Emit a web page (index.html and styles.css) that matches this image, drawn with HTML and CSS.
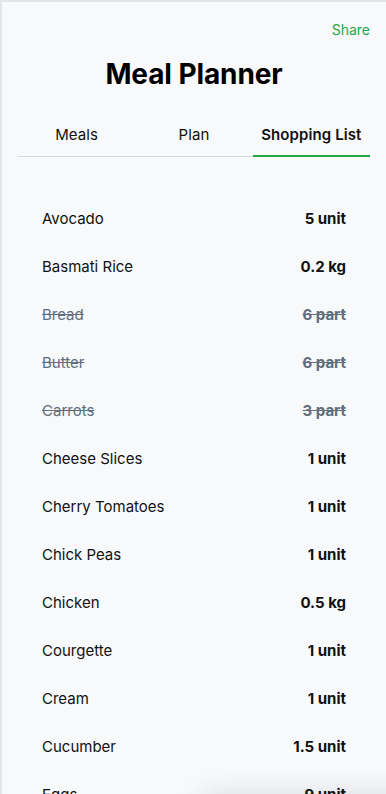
FILE: index.html
```html
<!DOCTYPE html>
<html lang="en">
<head>
<meta charset="utf-8">
<title>Meal Planner</title>
<link rel="stylesheet" href="styles.css">
</head>
<body>
<div class="frame">
  <div class="app">
    <div class="topbar"><a class="share" href="#">Share</a></div>
    <h1 class="title">Meal Planner</h1>
    <nav class="tabs">
      <div class="tab">Meals</div>
      <div class="tab">Plan</div>
      <div class="tab active">Shopping List</div>
    </nav>
    <ul class="list">
      <li class="row"><span class="name">Avocado</span><span class="qty">5 unit</span></li>
      <li class="row"><span class="name">Basmati Rice</span><span class="qty">0.2 kg</span></li>
      <li class="row done"><span class="name">Bread</span><span class="qty">6 part</span></li>
      <li class="row done"><span class="name">Butter</span><span class="qty">6 part</span></li>
      <li class="row done"><span class="name">Carrots</span><span class="qty">3 part</span></li>
      <li class="row"><span class="name">Cheese Slices</span><span class="qty">1 unit</span></li>
      <li class="row"><span class="name">Cherry Tomatoes</span><span class="qty">1 unit</span></li>
      <li class="row"><span class="name">Chick Peas</span><span class="qty">1 unit</span></li>
      <li class="row"><span class="name">Chicken</span><span class="qty">0.5 kg</span></li>
      <li class="row"><span class="name">Courgette</span><span class="qty">1 unit</span></li>
      <li class="row"><span class="name">Cream</span><span class="qty">1 unit</span></li>
      <li class="row"><span class="name">Cucumber</span><span class="qty">1.5 unit</span></li>
      <li class="row"><span class="name">Eggs</span><span class="qty">9 unit</span></li>
    </ul>
  </div>
  <div class="floating"></div>
</div>
</body>
</html>
```

FILE: styles.css
```css
html, body {
  margin: 0;
  padding: 0;
  height: 100%;
  overflow: hidden;
}
body {
  font-family: Inter, "Liberation Sans", Arial, sans-serif;
  color: #111111;
  background: #f8f9fb;
}
.frame {
  box-sizing: border-box;
  min-height: 100vh;
  border-top: 2px solid #e4e5e8;
  border-left: 2px solid #e4e5e8;
  background: #f8f9fb;
}
.app {
  padding: 0 16px;
}
.topbar {
  display: flex;
  justify-content: flex-end;
  padding-top: 18px;
}
.share {
  font-size: 14px;
  line-height: 20px;
  color: #22a846;
  text-decoration: none;
}
.title {
  margin: 16px 0 0;
  text-align: center;
  font-size: 28px;
  line-height: 36px;
  font-weight: 700;
  color: #000;
  letter-spacing: -0.1px;
}
.tabs {
  display: grid;
  grid-template-columns: 1fr 1fr 1fr;
  margin-top: 25px;
  border-bottom: 1px solid #d6d7da;
}
.tab {
  text-align: center;
  font-size: 15px;
  line-height: 20px;
  padding: 8px 0 10px;
  border-bottom: 2px solid transparent;
  margin-bottom: -1px;
  color: #111;
  letter-spacing: 0.1px;
}
.tab.active {
  font-weight: 600;
  border-bottom-color: #22a846;
}
.list {
  list-style: none;
  margin: 0;
  padding: 38px 24px 0;
}
.row {
  display: flex;
  justify-content: space-between;
  align-items: center;
  padding: 12px 0;
  font-size: 15px;
  line-height: 24px;
}
.qty {
  font-weight: 700;
}
.row.done {
  color: #626d7d;
  text-decoration: line-through;
}
.floating {
  position: fixed;
  left: 200px;
  top: 800px;
  width: 240px;
  height: 60px;
  border-radius: 16px;
  background: #f8f9fb;
  box-shadow: 0 -6px 30px rgba(0, 0, 0, 0.12);
}
```
